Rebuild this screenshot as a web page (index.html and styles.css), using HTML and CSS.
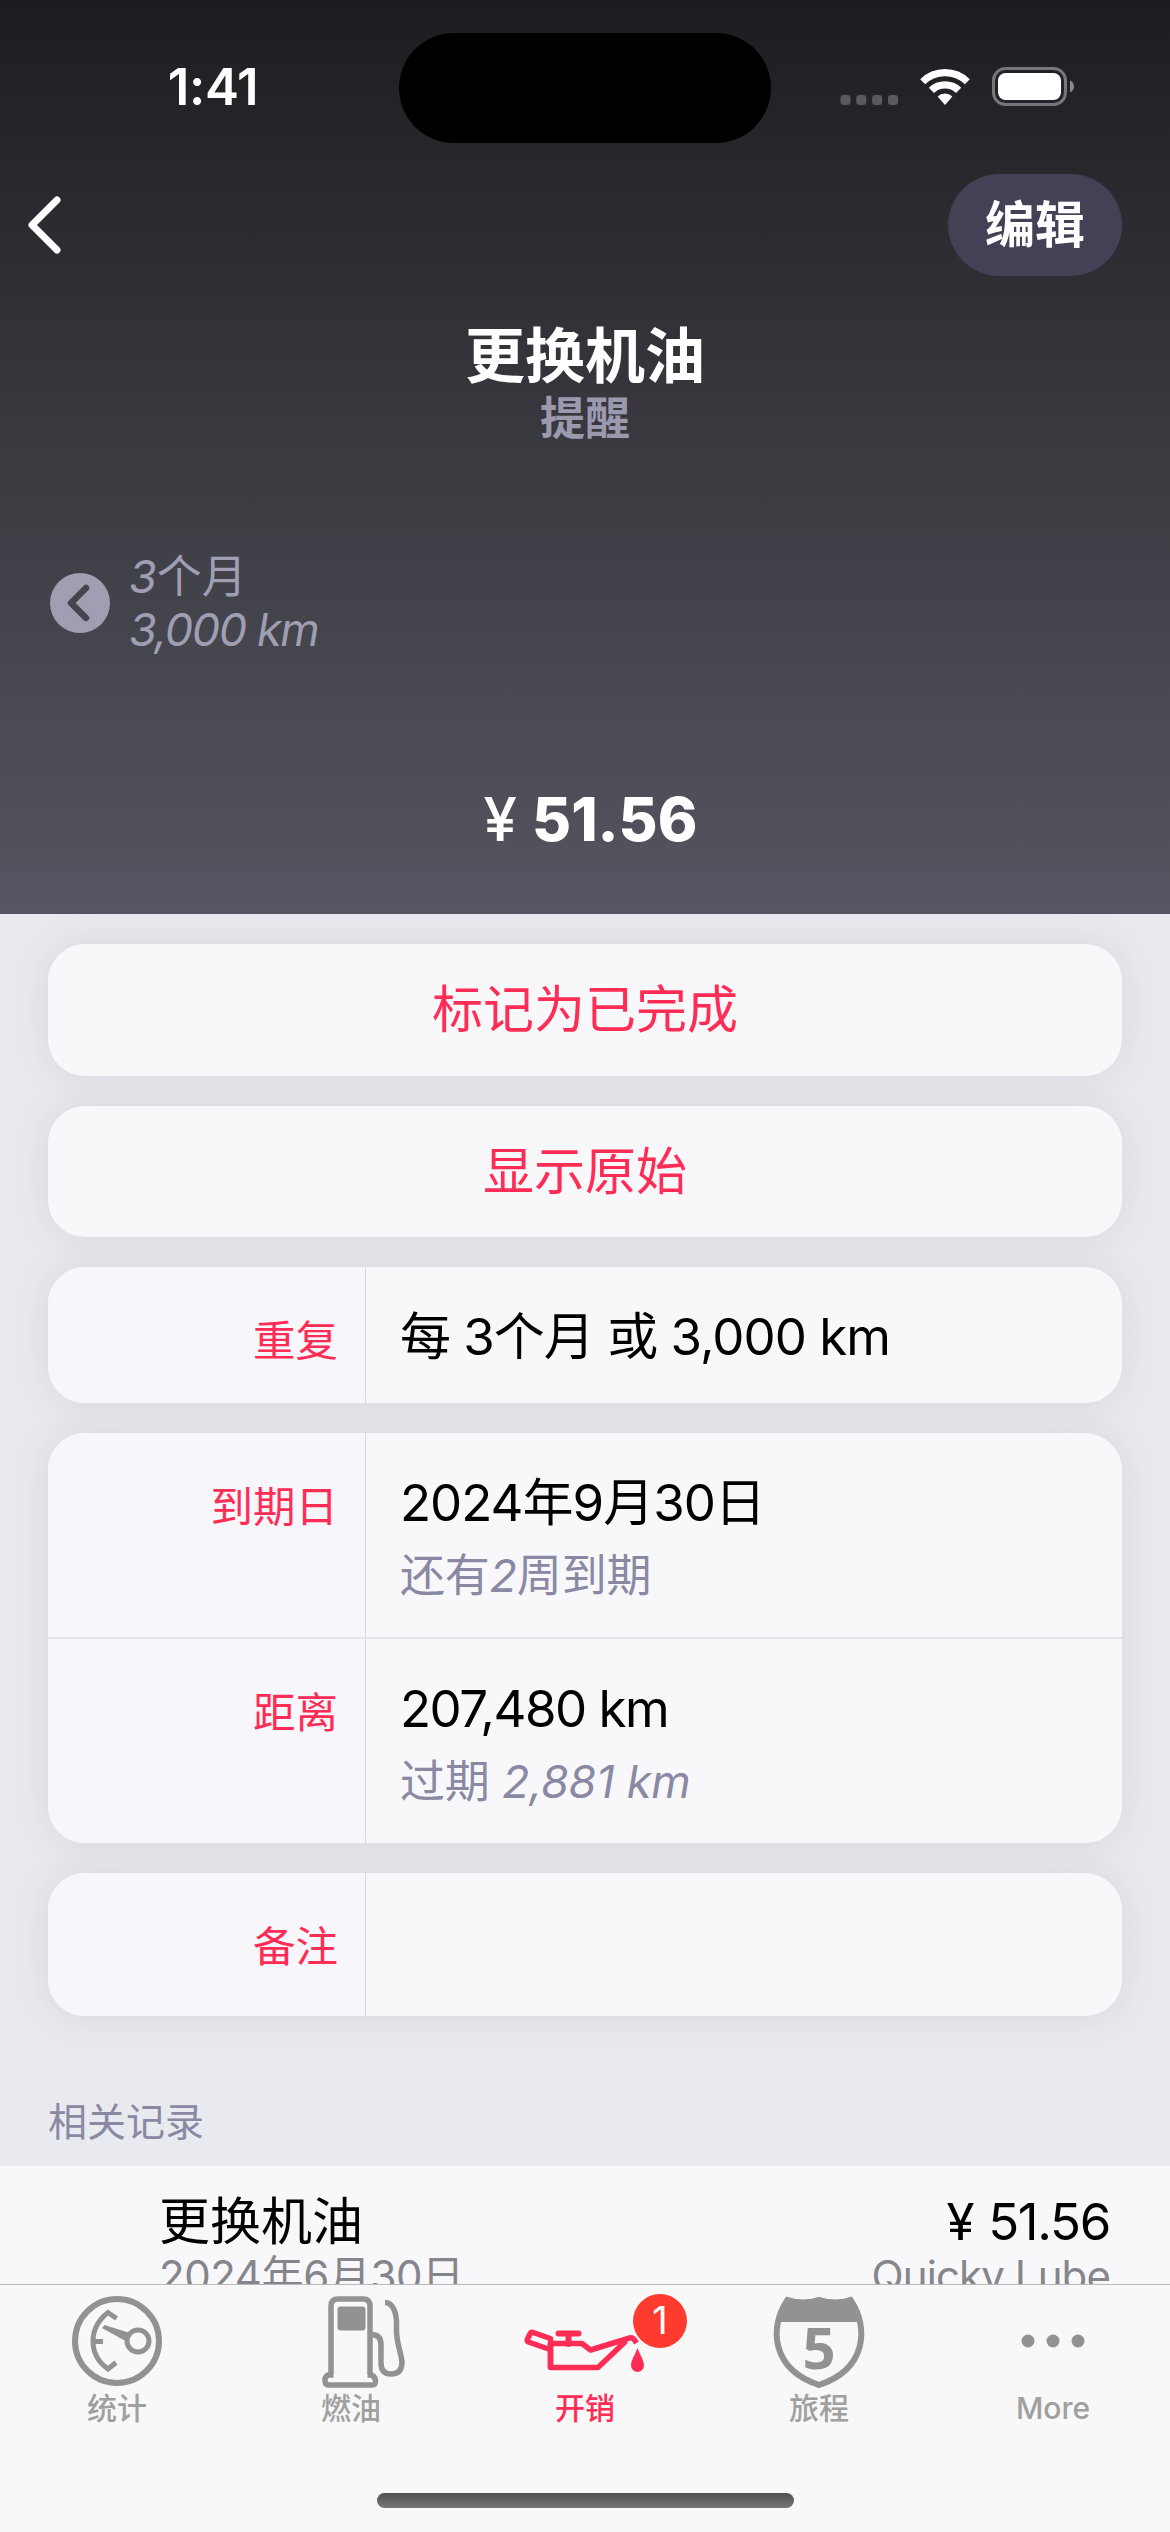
FILE: index.html
```html
<!DOCTYPE html>
<html lang="zh-CN">
<head>
    <meta charset="UTF-8">
    <meta name="viewport" content="width=device-width, initial-scale=1.0">
    <title>更换机油</title>
    <link rel="stylesheet" href="styles.css">
</head>
<body>
    <header class="header">
        <div class="status">
            <span class="time">1:41</span>
            <div class="island"></div>
            <div class="status-icons">
                <svg width="236" height="44" viewBox="0 0 236 44">
                    <g fill="#5a5a5e">
                        <rect x="1.5" y="30" width="10" height="10" rx="3" />
                        <rect x="17.3" y="30" width="10" height="10" rx="3" />
                        <rect x="33.1" y="30" width="10" height="10" rx="3" />
                        <rect x="49" y="30" width="10" height="10" rx="3" />
                    </g>
                    <g fill="#fff">
                        <path d="M81.2 14.2a35 35 0 0 1 49.6 0l-5 5a28.5 28.5 0 0 0-39.6 0z" />
                        <path d="M89.8 22.8a23 23 0 0 1 32.4 0l-5.2 5.2a15.8 15.8 0 0 0-22 0z" />
                        <path d="M98.6 31.4a11 11 0 0 1 14.8 0L106 40z" />
                        <rect x="159" y="8" width="63" height="27" rx="7.5" />
                    </g>
                    <rect x="154.5" y="3.5" width="72" height="36" rx="12" fill="none" stroke="#77777b" stroke-width="3" />
                    <path d="M231 15.500c5.300 2 5.300 10 0 12z" fill="#8a8a8e" />
                </svg>
            </div>
        </div>

        <nav class="nav">
            <svg class="back" width="34" height="58" viewBox="0 0 34 58">
                <path d="M30 4L5 29l25 25" fill="none" stroke="#fff" stroke-width="7" stroke-linecap="round" stroke-linejoin="round" />
            </svg>
            <button class="edit">编辑</button>
        </nav>

        <h1>更换机油</h1>
        <p class="subtitle">提醒</p>

        <div class="interval">
            <svg width="60" height="60" viewBox="0 0 60 60">
                <circle cx="30" cy="30" r="30" fill="#9f9eb2" />
                <path d="M36 15L21 30l15 15" fill="none" stroke="#45454d" stroke-width="6.500" stroke-linecap="round" stroke-linejoin="round" />
            </svg>
            <div>
                <div><i>3</i>个月</div>
                <div class="distance"><i>3,000 km</i></div>
            </div>
        </div>

        <div class="price"><span class="yen">¥</span>51.56</div>
    </header>

    <main class="content">
        <button class="card action">标记为已完成</button>
        <button class="card action">显示原始</button>

        <div class="card">
            <div class="row row-repeat">
                <div class="label">重复</div>
                <div class="value">每 3个月 或 3,000 km</div>
            </div>
        </div>

        <div class="card">
            <div class="row row-due">
                <div class="label">到期日</div>
                <div class="value">2024年9月30日<small>还有<i>2</i>周到期</small></div>
            </div>
            <div class="row row-due">
                <div class="label">距离</div>
                <div class="value distance">207,480 km<small>过期 <i>2,881 km</i></small></div>
            </div>
        </div>

        <div class="card">
            <div class="row row-notes">
                <div class="label">备注</div>
                <div class="value"></div>
            </div>
        </div>

        <h2>相关记录</h2>
        <div class="record">
            <div>
                <div class="record-title">更换机油</div>
                <div class="record-sub">2024年6月30日</div>
            </div>
            <div class="record-right">
                <div class="record-title amount"><span class="yen">¥</span>51.56</div>
                <div class="record-sub place">Quicky Lube</div>
            </div>
        </div>
    </main>

    <footer class="tabbar">
        <div class="tabs">
            <a class="tab">
                <svg width="96" height="96" viewBox="0 0 96 96" fill="none" stroke="#929292">
                    <circle cx="48" cy="48" r="42" stroke-width="6" />
                    <path d="M47.500 25.500L39 19.500C19 35 19 62 39 76l8-6.500M23 48.500h11" stroke-width="5" />
                    <circle cx="69" cy="48" r="11" stroke-width="5" />
                    <path d="M33 35l2.500-3L61 40l-4.500 8z" fill="#929292" stroke="none" />
                </svg>
                <span>统计</span>
            </a>
            <a class="tab">
                <svg width="116" height="96" viewBox="-22 0 116 96" fill="none" stroke="#929292" stroke-width="5.500">
                    <path d="M16 81V13q0-7 7-7h25q7 0 7 7v68" />
                    <path d="M18.500 82H13q-3.500 2-3 6 .2 4 4 4h43q3.500 0 3.500-4 0-4-4-6h-4" />
                    <rect x="22.500" y="13.500" width="28" height="24" rx="3" fill="#929292" stroke="none" />
                    <path d="M56 41.500q10 0 10 10V70q0 11 10 11 11 0 11-12c-1-10-6-20-5.500-33V28Q80 10 70 9.500" />
                </svg>
                <span>燃油</span>
            </a>
            <a class="tab active">
                <svg width="130" height="96" viewBox="0 0 130 96" fill="none" stroke="#ff2d55" stroke-width="5.500" stroke-linejoin="round">
                    <path d="M30.500 75V45.500L13 39.500q-2-.5-3 1.500L7.500 46q-.8 2 1 3l20 7" />
                    <path d="M30.500 50.500H62l8.500 6.500L108 45.500q4-2 6.500 1.500l2 3M30.500 50.500V74.500H78L106 48" />
                    <path d="M38.500 40.500H58.500M48.500 42v9" stroke-linecap="round" stroke-width="6" />
                    <path d="M117.500 55C115 62 111 67 111 72.500a6.500 6.500 0 0 0 13 0C124 67 120 62 117.500 55z" fill="#ff2d55" stroke="none" />
                </svg>
                <b class="badge">1</b>
                <span>开销</span>
            </a>
            <a class="tab">
                <svg width="96" height="96" viewBox="0 0 96 96">
                    <path d="M16.500 7q15 5 31.500 0 16.500 5 31.500 0C98 34 96 76 48 92 0 76-2 34 16.500 7z" fill="none" stroke="#929292" stroke-width="6" />
                    <path d="M16 4q16 6 32 0 16 6 32 0 8 12 10 25H6q2-13 10-25z" fill="#929292" />
                    <text x="48" y="76" text-anchor="middle" class="route">5</text>
                </svg>
                <span>旅程</span>
            </a>
            <a class="tab">
                <svg width="96" height="96" viewBox="0 0 96 96" fill="#929292">
                    <circle cx="23" cy="48" r="6.500" />
                    <circle cx="48" cy="48" r="6.500" />
                    <circle cx="73" cy="48" r="6.500" />
                </svg>
                <span class="more">More</span>
            </a>
        </div>
        <div class="home"></div>
    </footer>
</body>
</html>
```

FILE: styles.css
```css
* {
    box-sizing: border-box;
}

body {
    margin: 0;
    width: 1170px;
    height: 2532px;
    display: flex;
    flex-direction: column;
    overflow: hidden;
    background: #e9eaef;
    color: #000;
    font-family: Inter, "Noto Sans CJK SC", sans-serif;
}

h1, h2, p {
    margin: 0;
}

button {
    border: none;
    padding: 0;
    font-family: inherit;
}

svg {
    display: block;
    flex: none;
}

.header {
    height: 914px;
    flex: none;
    background: linear-gradient(#1d1c21, #37373d 45%, #565662);
    color: #fff;
    text-align: center;
}

.status {
    height: 174px;
    display: grid;
    grid-template-columns: 399px 372px 399px;
    align-items: center;
}

.time {
    padding-left: 27px;
    font-size: 51px;
    font-weight: 600;
    letter-spacing: -0.3px;
    line-height: 60px;
}

.island {
    height: 110px;
    margin-top: 2px;
    border-radius: 55px;
    background: #000;
}

.status-icons {
    padding-left: 68px;
}

.nav {
    height: 102px;
    padding: 0 48px 0 27px;
    display: flex;
    justify-content: space-between;
    align-items: center;
}

.edit {
    width: 174px;
    height: 102px;
    border-radius: 51px;
    background: #424156;
    color: #fff;
    font-size: 50px;
    font-weight: 600;
    line-height: 102px;
}

h1 {
    margin-top: 45px;
    font-size: 60px;
    font-weight: 600;
    line-height: 70px;
}

.subtitle {
    color: #9b99ae;
    font-size: 45px;
    font-weight: 600;
    line-height: 56px;
}

.interval {
    margin-top: 103px;
    padding-left: 50px;
    display: flex;
    align-items: center;
    gap: 19px;
    color: #9f9eb2;
    font-size: 45px;
    line-height: 53px;
    text-align: left;
}

.distance {
    letter-spacing: -1.4px;
}

.price {
    margin-top: 128px;
    padding-left: 11px;
    font-size: 60px;
    font-weight: 800;
    line-height: 70px;
}

.yen {
    margin-right: 15px;
    font-weight: 500;
}

.content {
    flex: 1;
    min-height: 0;
    overflow: hidden;
    padding-top: 30px;
}

.card {
    display: block;
    width: 1074px;
    margin: 0 48px 30px;
    border-radius: 37px;
    overflow: hidden;
    background: #f8f8fb;
    box-shadow: 0 0 36px rgba(120, 110, 125, 0.16);
}

.action {
    height: 131.5px;
    color: #ff2d55;
    font-size: 51px;
    font-weight: 400;
    line-height: 132px;
}

.row {
    display: flex;
}

.row + .row {
    border-top: 2px solid #e6e5ee;
}

.label {
    width: 318px;
    padding-right: 27px;
    border-right: 1px solid #d9d8e2;
    background: #f7f7fb;
    color: #ff2d55;
    font-size: 42.5px;
    line-height: 60px;
    text-align: right;
}

.value {
    padding-left: 34px;
    font-size: 51px;
    letter-spacing: -1px;
    line-height: 60px;
}

.value.distance {
    letter-spacing: -1.5px;
}

.value small {
    display: block;
    margin-top: 13px;
    color: #8a89a3;
    font-size: 45px;
    letter-spacing: -0.2px;
    line-height: 60px;
}

.row-repeat {
    height: 136px;
}

.row-due {
    height: 204px;
}

.row + .row-due {
    height: 206px;
}

.row-notes {
    height: 143px;
}

.row .label {
    padding-top: 44px;
}

.row .value {
    padding-top: 40px;
}

h2 {
    margin: 76px 0 14px 48px;
    color: #8a89a3;
    font-size: 39px;
    font-weight: 400;
    line-height: 60px;
}

.record {
    display: flex;
    justify-content: space-between;
    padding: 26px 60px 0 159px;
    height: 180px;
    background: #f8f8fb;
}

.record-title {
    font-size: 51px;
    line-height: 60px;
}

.amount {
    letter-spacing: -1.3px;
}

.amount .yen {
    font-weight: 400;
}

.record-sub {
    color: #85858b;
    font-size: 42px;
    letter-spacing: -0.4px;
    line-height: 48px;
}

.place {
    letter-spacing: -0.9px;
}

.record-right {
    text-align: right;
}

.tabbar {
    height: 248px;
    flex: none;
    display: flex;
    flex-direction: column;
    align-items: center;
    justify-content: space-between;
    border-top: 1px solid #b9b9bc;
    background: #f8f8f8;
}

.tabs {
    width: 1170px;
    padding-top: 8px;
    display: grid;
    grid-template-columns: repeat(5, 1fr);
}

.tab {
    position: relative;
    display: flex;
    flex-direction: column;
    align-items: center;
    color: #a0a0a0;
    font-size: 30px;
    font-weight: 500;
    line-height: 39px;
}

.active {
    color: #ff2d55;
}

.badge {
    position: absolute;
    left: 165px;
    top: 1px;
    width: 54px;
    height: 54px;
    border-radius: 27px;
    background: #ff3b30;
    color: #fff;
    font-size: 38px;
    font-weight: 400;
    line-height: 53px;
    text-align: center;
}

.route {
    fill: #929292;
    font-family: "Open Sans", sans-serif;
    font-size: 58px;
    font-weight: 700;
}

.home {
    width: 417px;
    height: 15px;
    margin-bottom: 24px;
    border-radius: 8px;
    background: linear-gradient(#505050, #787878);
}
```
